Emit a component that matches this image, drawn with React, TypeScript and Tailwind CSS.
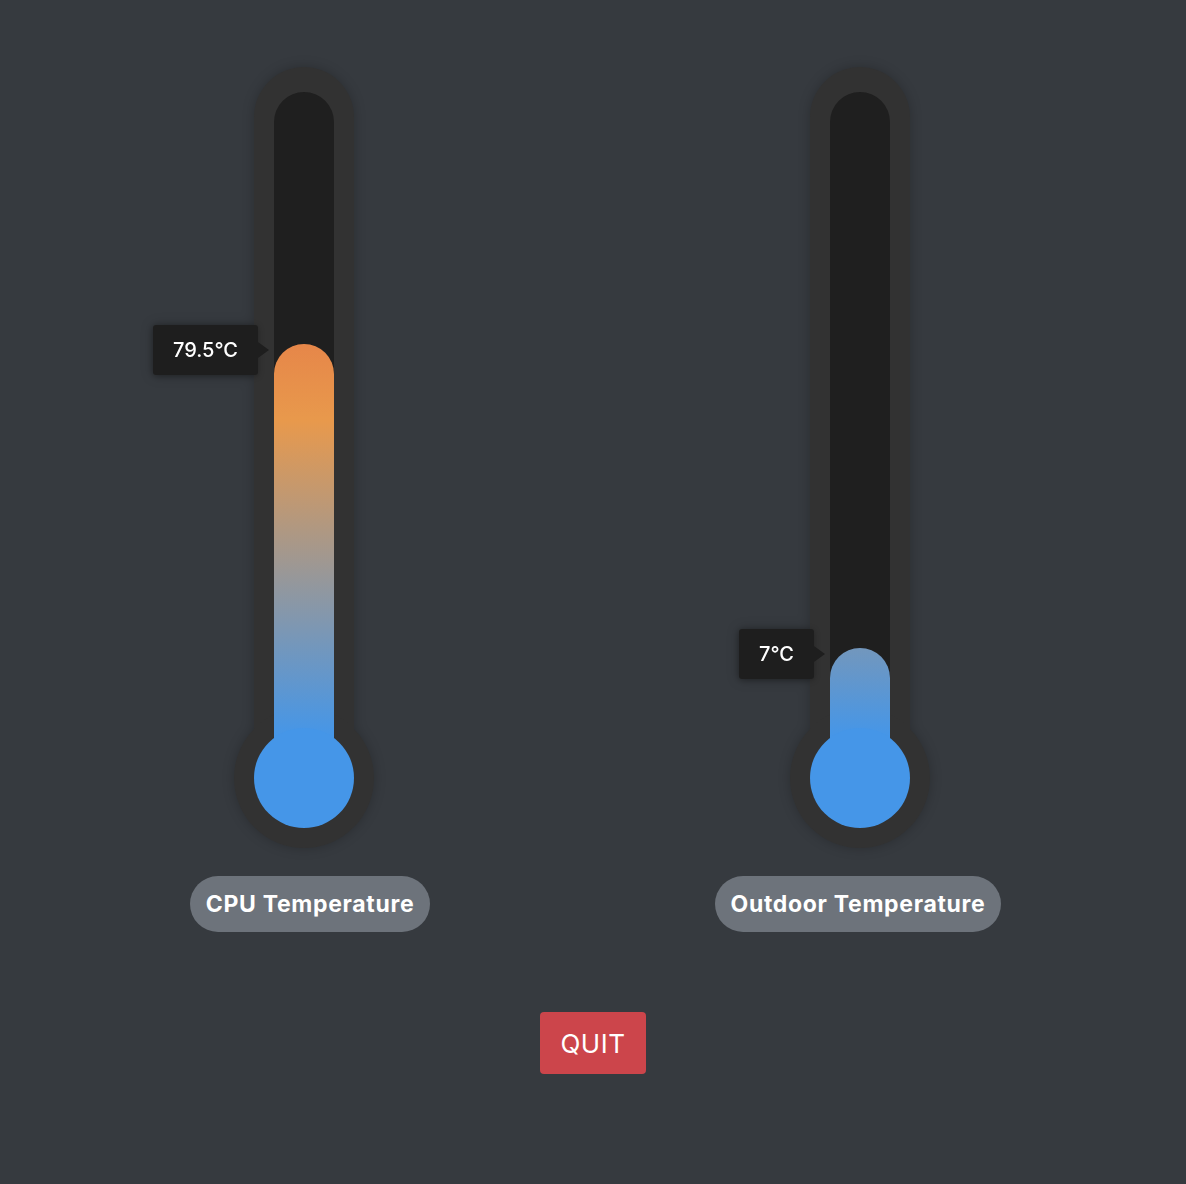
import React from 'react'

type Reading = {
  label: string
  value: string
  fill: number
  shift: string
  labelShift: string
}

const readings: Reading[] = [
  { label: 'CPU Temperature', value: '79.5°C', fill: 433, shift: 'mr-[6px]', labelShift: 'ml-[6px]' },
  { label: 'Outdoor Temperature', value: '7°C', fill: 129, shift: 'ml-[2px]', labelShift: '-ml-[2px]' },
]

function Thermometer({ value, fill, className }: { value: string; fill: number; className?: string }) {
  return (
    <div className={`flex w-[140px] flex-col items-center drop-shadow-[0_0_6px_rgba(0,0,0,0.22)] ${className ?? ''}`}>
      {/* tube */}
      <div className="flex h-[710px] w-[100px] flex-col rounded-t-full bg-[#323232] px-5 pt-[25px]">
        <div className="relative z-10 flex flex-1 flex-col justify-end rounded-t-full bg-[#1f1f1f]">
          <div
            className="relative rounded-t-full bg-[linear-gradient(to_top,#4596e8_6%,#e8994c_52%,#e04a40_100%)] bg-[length:60px_685px] bg-bottom bg-no-repeat"
            style={{ height: fill }}
          >
            <div className="absolute right-full -top-[19px] mr-4 flex items-center">
              <div className="flex h-[50px] items-center rounded-[3px] bg-[#1e1e1e] px-5 text-[20px] font-medium text-white shadow-[0_1px_6px_rgba(0,0,0,0.3)]">
                {value}
              </div>
              <div className="absolute -right-[11px] h-0 w-0 border-y-[8px] border-l-[11px] border-y-transparent border-l-[#1e1e1e]" />
            </div>
          </div>
        </div>
      </div>
      {/* bulb */}
      <div className="-mt-[69px] h-[140px] w-[140px] rounded-full bg-[#323232] p-5">
        <div className="relative z-20 h-full w-full rounded-full bg-[#4596e8]" />
      </div>
    </div>
  )
}

export default function App() {
  return (
    <div className="min-h-screen bg-[#363a3f] pt-[67px] font-['Inter','Liberation_Sans',sans-serif]">
      <div className="flex gap-[252px] pl-[157px]">
        {readings.map((r) => (
          <div key={r.label} className="flex w-[300px] flex-col items-center">
            <Thermometer value={r.value} fill={r.fill} className={r.shift} />
            <div
              className={`mt-[28px] flex h-14 items-center rounded-full bg-[#6d737b] px-4 text-[23px] font-bold tracking-[0.03em] text-white ${r.labelShift}`}
            >
              {r.label}
            </div>
          </div>
        ))}
      </div>
      <div className="mt-[80px] flex justify-center">
        <button className="h-[62px] rounded bg-[#cc454b] px-5 text-[26px] tracking-[0.02em] text-white">
          QUIT
        </button>
      </div>
    </div>
  )
}
